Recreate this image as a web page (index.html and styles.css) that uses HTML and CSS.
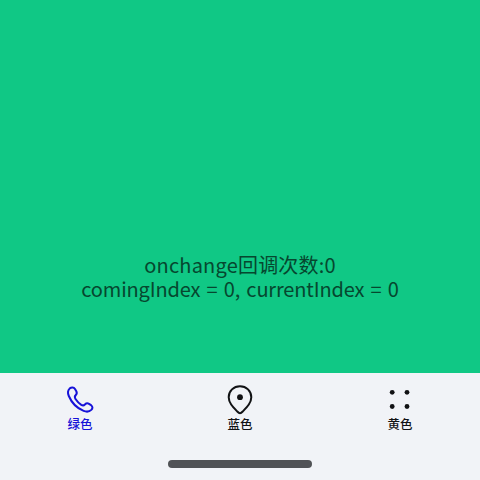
FILE: index.html
```html
<!DOCTYPE html>
<html lang="zh-CN">
<head>
<meta charset="utf-8">
<title>Tabs</title>
<link rel="stylesheet" href="styles.css">
</head>
<body>
<main class="content">
  <p class="line line-count">onchange回调次数:0</p>
  <p class="line line-index">comingIndex = 0, currentIndex = 0</p>
</main>
<nav class="tabs">
  <div class="tab active">
    <svg class="icon" viewBox="0 0 32 32"><path d="M5.6 4.6 C7.5 2.9 9.7 3 11 5 L12.3 7.2 C13.3 8.9 12.8 10 11.6 11.3 C10.5 12.5 10.6 13.6 11.5 15 C13 17.3 15 19.3 17.3 20.8 C18.6 21.6 19.8 21.6 20.9 20.5 C22.2 19.2 23.4 18.9 25 19.8 L27.1 21.2 C28.9 22.5 28.8 24.4 27.3 25.9 C25.2 27.9 22.4 28 19.6 26.9 C13.1 24.2 7.6 18.6 4.8 12 C3.6 9.1 3.6 6.5 5.6 4.6 Z"/></svg>
    <span class="label">绿色</span>
  </div>
  <div class="tab">
    <svg class="icon" viewBox="0 0 32 32"><path d="M16 29.2 C14.9 29.2 14.2 28.5 13.3 27.5 C8.6 22.6 4.7 18.6 4.7 13.3 C4.7 7 9.7 2.2 16 2.2 C22.3 2.2 27.3 7 27.3 13.3 C27.3 18.6 23.4 22.6 18.7 27.5 C17.8 28.5 17.1 29.2 16 29.2 Z"/><circle class="dot" cx="16" cy="13.2" r="2.9"/></svg>
    <span class="label">蓝色</span>
  </div>
  <div class="tab">
    <svg class="icon" viewBox="0 0 32 32"><g class="dot"><circle cx="8.2" cy="8.3" r="2.4"/><circle cx="23" cy="8.3" r="2.4"/><circle cx="8.2" cy="22.5" r="2.4"/><circle cx="23" cy="22.5" r="2.4"/></g></svg>
    <span class="label">黄色</span>
  </div>
</nav>
<footer class="home"><div class="handle"></div></footer>
</body>
</html>
```

FILE: styles.css
```css
body {
  margin: 0;
  height: 480px;
  display: flex;
  flex-direction: column;
  overflow: hidden;
  background: #f1f3f7;
  font-family: "Noto Sans CJK SC", sans-serif;
}
.content {
  height: 373px;
  box-sizing: border-box;
  padding-top: 253px;
  background: #10c885;
  color: #06472f;
  display: flex;
  flex-direction: column;
  align-items: center;
}
.line {
  margin: 0;
  font-size: 20px;
  line-height: 24px;
  white-space: nowrap;
}
.line-count { letter-spacing: 0.2px; }
.line-index {
  letter-spacing: -0.15px;
  word-spacing: 1.9px;
}
.tabs {
  height: 75px;
  display: grid;
  grid-template-columns: repeat(3, 1fr);
}
.tab {
  display: flex;
  flex-direction: column;
  align-items: center;
  padding-top: 11px;
  color: #111214;
}
.active { color: #1712d8; }
.icon {
  width: 32px;
  height: 32px;
  fill: none;
  stroke: currentColor;
  stroke-width: 2;
  stroke-linejoin: round;
}
.dot { fill: currentColor; stroke: none; }
.label {
  font-size: 12.5px;
  font-weight: 500;
  line-height: 16px;
}
.home {
  height: 32px;
  display: flex;
  justify-content: center;
  align-items: center;
}
.handle {
  width: 144px;
  height: 8px;
  border-radius: 4px;
  background: #505256;
}
```
